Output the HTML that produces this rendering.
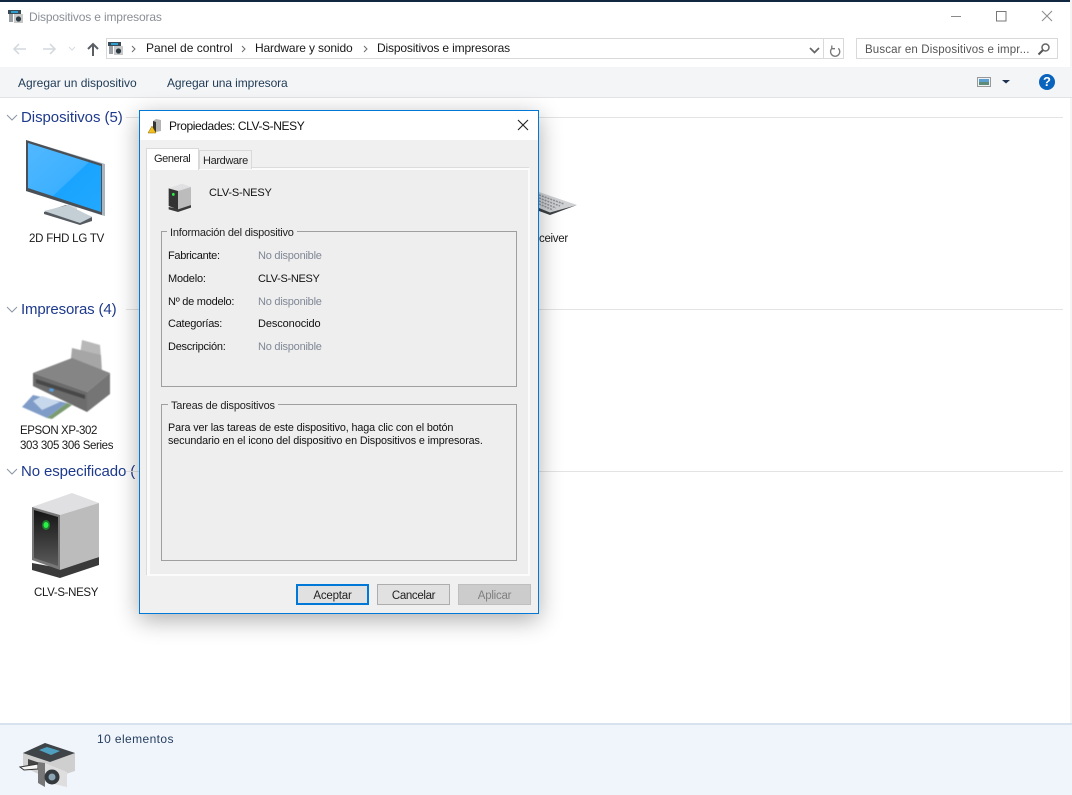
<!DOCTYPE html>
<html lang="es"><head><meta charset="utf-8"><title>Dispositivos e impresoras</title>
<style>
html,body{margin:0;padding:0;width:1072px;height:795px;overflow:hidden;background:#fff;font-family:"Liberation Sans",sans-serif;font-size:12px;color:#1a1a1a}
.a{position:absolute;white-space:nowrap}
.t{position:absolute;white-space:nowrap;line-height:14px}
.h{position:absolute;white-space:nowrap;font-size:15px;color:#1e3a8c;line-height:18px}
.l{position:absolute;height:1px;background:#e3e3e3}
.d{font-size:11px;color:#111}
.g{color:#808896}
.btn{position:absolute;top:584px;width:73px;height:21px;box-sizing:border-box;text-align:center;font-size:11.5px}
svg{position:absolute;overflow:visible}
</style></head><body>
<div class="a" style="left:0;top:0;width:1072px;height:2px;background:#10273f"></div>
<div class="a" style="left:1070px;top:0;width:2px;height:795px;background:#f4f4f4"></div>

<svg style="left:8px;top:9px" width="16" height="16" viewBox="0 0 16 16"><rect x="0" y="1" width="13" height="4" fill="#3a4a55"/><rect x="3" y="2" width="7" height="2" fill="#2f9fd0"/><rect x="1" y="5" width="4" height="8" fill="#9aa0a5"/><rect x="6" y="5" width="9" height="9" fill="#c8c8c8"/><circle cx="10.500" cy="10" r="2.600" fill="#2a3a42"/></svg>
<div class="t" style="left:29px;top:10px;color:#8a8f96;letter-spacing:-.16px">Dispositivos e impresoras</div>
<svg style="left:950px;top:10px" width="102" height="14"><path d="M1 6.500H11" stroke="#8a8a8a" fill="none"/><rect x="46.500" y="1.500" width="9.500" height="9.500" fill="none" stroke="#777"/><path d="M92 1L102 11M102 1L92 11" stroke="#8a8a8a" fill="none"/></svg>

<svg style="left:12px;top:41px" width="100" height="16"><path d="M2 8H14M7 3L2 8L7 13" stroke="#d3d8dd" stroke-width="1.500" fill="none"/><path d="M31 8H43M38 3L43 8L38 13" stroke="#d3d8dd" stroke-width="1.500" fill="none"/><path d="M57 6L60 9L63 6" stroke="#d8dbdf" fill="none"/><path d="M81 15V3M76 8L81 3L86 8" stroke="#5a5f66" stroke-width="2" fill="none"/></svg>
<div class="a" style="left:106px;top:38px;width:738px;height:21px;box-sizing:border-box;border:1px solid #d9d9d9"></div>
<div class="a" style="left:823px;top:38px;width:1px;height:21px;background:#d9d9d9"></div>
<svg style="left:108px;top:41px" width="16" height="16" viewBox="0 0 16 16"><rect x="0" y="1" width="13" height="4" fill="#3a4a55"/><rect x="3" y="2" width="7" height="2" fill="#2f9fd0"/><rect x="1" y="5" width="4" height="8" fill="#9aa0a5"/><rect x="6" y="5" width="9" height="9" fill="#c8c8c8"/><circle cx="10.500" cy="10" r="2.600" fill="#2a3a42"/></svg>
<svg style="left:130px;top:44px" width="240" height="10"><path d="M2 2L5 5L2 8M112 2L115 5L112 8M234 2L237 5L234 8" stroke="#6a6a6a" fill="none"/></svg>
<div class="t" style="left:146px;top:41px">Panel de control</div>
<div class="t" style="left:255px;top:41px;letter-spacing:-.15px">Hardware y sonido</div>
<div class="t" style="left:377px;top:41px;letter-spacing:-.15px">Dispositivos e impresoras</div>
<svg style="left:808px;top:44px" width="36" height="12"><path d="M2 4L6.500 8.500L11 4" stroke="#666" stroke-width="1.700" fill="none"/><path d="M30.800 2.800A4.600 4.600 0 1 1 24.500 2.800M24.300 0V3.200H27.500" stroke="#777" stroke-width="1.300" fill="none" transform="translate(-.5 1.500)"/></svg>
<div class="a" style="left:856px;top:38px;width:202px;height:21px;box-sizing:border-box;border:1px solid #d9d9d9"></div>
<div class="t" style="left:865px;top:43px;color:#555;font-size:11.500px;letter-spacing:.13px">Buscar en Dispositivos e impr...</div>
<svg style="left:1037px;top:42px" width="14" height="14"><circle cx="8.500" cy="5.500" r="3.500" fill="none" stroke="#666" stroke-width="1.500"/><path d="M6 8L1.500 12.500" stroke="#555" stroke-width="2"/></svg>

<div class="a" style="left:0;top:67px;width:1072px;height:31px;box-sizing:border-box;background:#f4f5f7;border-bottom:1px solid #e3e3e3"></div>
<div class="t" style="left:18px;top:76px;color:#1f3a55;font-size:12px">Agregar un dispositivo</div>
<div class="t" style="left:167px;top:76px;color:#1f3a55;font-size:12px;letter-spacing:-.1px">Agregar una impresora</div>
<svg style="left:977px;top:77px" width="32" height="12"><rect x=".5" y=".5" width="13" height="9" fill="#eef2f5" stroke="#999"/><rect x="2" y="2" width="10" height="3" fill="#5a9fd0"/><rect x="2" y="5" width="10" height="3" fill="#5e8a78"/><path d="M25 3H33L29 6.500Z" fill="#1f3050"/></svg>
<div class="a" style="left:1039px;top:74px;width:16px;height:16px;border-radius:50%;background:#0a64bd;color:#fff;font-weight:bold;font-size:13px;line-height:16px;text-align:center">?</div>

<svg style="left:6px;top:113px" width="12" height="10"><path d="M1 2L6 7L11 2" stroke="#8a95a5" fill="none"/></svg>
<div class="h" style="left:21px;top:109px;letter-spacing:-.05px">Dispositivos (5)</div>
<div class="l" style="left:126px;top:117px;width:937px"></div>
<svg style="left:6px;top:305px" width="12" height="10"><path d="M1 2L6 7L11 2" stroke="#8a95a5" fill="none"/></svg>
<div class="h" style="left:21px;top:301px;letter-spacing:-.15px">Impresoras (4)</div>
<div class="l" style="left:126px;top:309px;width:937px"></div>
<svg style="left:6px;top:467px" width="12" height="10"><path d="M1 2L6 7L11 2" stroke="#8a95a5" fill="none"/></svg>
<div class="h" style="left:21px;top:463px;letter-spacing:-.1px">No especificado (</div>
<div class="l" style="left:126px;top:471px;width:937px"></div>

<!-- Monitor -->
<svg style="left:0;top:130px" width="140" height="110">
<defs>
<linearGradient id="scr" x1="0" y1="0" x2="1" y2="1"><stop offset="0" stop-color="#52b8ff"/><stop offset=".55" stop-color="#3cb0ff"/><stop offset=".56" stop-color="#19a4ff"/><stop offset="1" stop-color="#22a8ff"/></linearGradient>
<linearGradient id="drv" x1="0" y1="0" x2="0" y2="1"><stop offset="0" stop-color="#141414"/><stop offset="1" stop-color="#5a5a5a"/></linearGradient>
</defs>
<path d="M68 70L77 73V85L68 83Z" fill="#d9dde0"/>
<path d="M44 82L66 75L92 87V91L80 95L44 84Z" fill="#555b60"/>
<path d="M44 81L68 75L92 87L80 93Z" fill="#c3ced5"/>
<path d="M26 10L105 34V86L101 85L26 61Z" fill="#aab4bc"/>
<path d="M26 10L102 34V85L26 61Z" fill="#4a5055"/>
<path d="M28 13L101 36V82L28 58Z" fill="url(#scr)"/>
</svg>
<div class="t" style="left:29px;top:232px;font-size:11.500px;letter-spacing:-.22px">2D FHD LG TV</div>

<!-- Printer -->
<svg style="left:0;top:330px;filter:blur(.5px)" width="140" height="85">
<path d="M82 10L100 15L101 27L80 25Z" fill="#b8b8b8"/>
<path d="M72 18L101 25L102 42L70 38Z" fill="#a6a6a6"/>
<path d="M33 43L72 28L110 43L87 62Z" fill="#858585"/>
<path d="M33 43L87 62V82L33 56Z" fill="#6c6c6c"/>
<path d="M36 49L85 65V69L36 53Z" fill="#484848"/>
<path d="M87 62L110 43V64L87 82Z" fill="#757575"/>
<path d="M50 58L54 59L53 62L49 61Z" fill="#5a9fe0"/>
<path d="M22 77L33 65L67 73L47 88Z" fill="#7f9cc8"/>
<path d="M33 71L42 66L60 72L42 80Z" fill="#c8d8ec"/>
<path d="M47 88L67 73L72 75L52 89Z" fill="#7a9a70"/>
</svg>
<div class="t" style="left:20px;top:424px;font-size:11.500px;letter-spacing:-.4px">EPSON XP-302</div>
<div class="t" style="left:20px;top:439px;font-size:11.500px;letter-spacing:-.37px">303 305 306 Series</div>

<!-- Drive -->
<svg style="left:0;top:480px" width="140" height="100">
<path d="M32 83V90L60 98L99 85V77L60 88Z" fill="#3a3a3a"/>
<path d="M32 27L72 13L99 23L60 35Z" fill="#e0e0e2"/>
<path d="M32 27L60 35V90L32 80Z" fill="#777"/>
<path d="M34 30L58 37V86L34 78Z" fill="url(#drv)"/>
<path d="M60 35L99 23V77L60 90Z" fill="#bcbcbc"/>
<ellipse cx="46" cy="45" rx="4" ry="5" fill="#17c52e" opacity=".55"/>
<ellipse cx="46" cy="45" rx="2.500" ry="3" fill="#2cf04a"/>
</svg>
<div class="t" style="left:34px;top:586px;font-size:11.500px;letter-spacing:-.35px">CLV-S-NESY</div>

<!-- Keyboard fragment -->
<svg style="left:530px;top:185px" width="50" height="35"><path d="M9 7L47 20L20 28L9 24Z" fill="#cfd1d3"/><path d="M9 10L34 19M9 13L30 21M9 16L26 23M9 19L23 25" stroke="#8f9499" stroke-width="1.500" stroke-dasharray="2 1" fill="none"/><path d="M9 23L20 27.500L47 20L20 30L9 26Z" fill="#3d4246"/></svg>
<div class="t" style="left:539px;top:232px;font-size:11.500px;letter-spacing:-.3px">ceiver</div>

<!-- Status bar -->
<div class="a" style="left:0;top:723px;width:1072px;height:72px;background:#f0f4fb;border-top:2px solid #d8e2ee;box-sizing:border-box"></div>
<svg style="left:0;top:715px" width="90" height="80">
<path d="M23 38L45 28L75 38V56L50 64L23 52Z" fill="#cfcfcf"/>
<path d="M23 38L45 28L75 38L50 47Z" fill="#3f4448"/>
<path d="M39 35L47 32L60 36L51 40Z" fill="#4fa0c0"/>
<path d="M28 44L46 50V56L28 50Z" fill="#444"/>
<path d="M20 52L38 49V54L24 55Z" fill="#f5f5f5" stroke="#333" stroke-width="1"/>
<path d="M38 47L45 48V72L38 68Z" fill="#777"/>
<path d="M45 48L67 57V72L45 67Z" fill="#dedede"/>
<circle cx="52" cy="62" r="7.500" fill="#34393e"/><circle cx="52" cy="62" r="3.500" fill="#8aa4b4"/>
</svg>
<div class="t" style="left:97px;top:732px;color:#26405e;letter-spacing:.4px">10 elementos</div>

<!-- Dialog -->
<div class="a" style="left:139px;top:110px;width:400px;height:504px;box-sizing:border-box;background:#f0f0f0;border:1px solid #0078d7;box-shadow:0 6px 22px rgba(0,0,0,.32)"></div>
<div class="a" style="left:140px;top:111px;width:398px;height:29px;background:#fff"></div>
<svg style="left:148px;top:118px" width="16" height="16" viewBox="0 0 16 16"><path d="M5 3L8 1L13 2V13L8 14L5 12Z" fill="#b5b5b5"/><path d="M5 3L8 4V14L5 12Z" fill="#333"/><path d="M4 8L8 15H0Z" fill="#f4c020" stroke="#8a6a00" stroke-width=".5"/></svg>
<div class="t" style="left:169px;top:119px;font-size:12px;letter-spacing:-.4px;color:#111">Propiedades: CLV-S-NESY</div>
<svg style="left:517px;top:119px" width="12" height="12"><path d="M1 1L11 11M11 1L1 11" stroke="#222" stroke-width="1.100" fill="none"/></svg>

<div class="a" style="left:147px;top:168px;width:383px;height:408px;box-sizing:border-box;background:#eeeeee;border:2px solid #fbfbfb;border-left-width:3px;box-shadow:-1px -1px 0 #dcdcdc"></div>
<div class="a" style="left:199px;top:150px;width:53px;height:19px;box-sizing:border-box;background:#f0f0f0;border:1px solid #d9d9d9;border-bottom:0"></div>
<div class="a" style="left:146px;top:148px;width:53px;height:22px;box-sizing:border-box;background:#fff;border:1px solid #d9d9d9;border-bottom:0"></div>
<div class="t d" style="left:154px;top:152px;color:#222;letter-spacing:-.4px">General</div>
<div class="t d" style="left:203px;top:154px;color:#222;letter-spacing:-.35px">Hardware</div>

<svg style="left:168px;top:183px" width="24" height="29" viewBox="30 11 72 87"><path d="M32 83V90L60 98L99 85V77L60 88Z" fill="#3a3a3a"/><path d="M32 27L72 13L99 23L60 35Z" fill="#e0e0e2"/><path d="M32 27L60 35V90L32 80Z" fill="#333"/><path d="M60 35L99 23V77L60 90Z" fill="#bcbcbc"/><ellipse cx="46" cy="45" rx="4" ry="4.500" fill="#2cf04a"/></svg>
<div class="t d" style="left:209px;top:186px;letter-spacing:-.2px">CLV-S-NESY</div>

<div class="a" style="left:161px;top:231px;width:356px;height:156px;box-sizing:border-box;border:1px solid #9f9f9f"></div>
<div class="t d" style="left:167px;top:226px;background:#eee;padding:0 3px;color:#222;letter-spacing:-.22px">Información del dispositivo</div>
<div class="t d" style="left:168px;top:249px;letter-spacing:-.3px">Fabricante:</div><div class="t d g" style="left:258px;top:249px;letter-spacing:-.23px">No disponible</div>
<div class="t d" style="left:168px;top:272px;letter-spacing:-.2px">Modelo:</div><div class="t d" style="left:258px;top:272px;letter-spacing:-.3px">CLV-S-NESY</div>
<div class="t d" style="left:168px;top:295px;letter-spacing:-.25px">Nº de modelo:</div><div class="t d g" style="left:258px;top:295px;letter-spacing:-.23px">No disponible</div>
<div class="t d" style="left:168px;top:317px;letter-spacing:-.25px">Categorías:</div><div class="t d" style="left:258px;top:317px;letter-spacing:-.1px">Desconocido</div>
<div class="t d" style="left:168px;top:340px;letter-spacing:-.25px">Descripción:</div><div class="t d g" style="left:258px;top:340px;letter-spacing:-.23px">No disponible</div>

<div class="a" style="left:161px;top:404px;width:356px;height:157px;box-sizing:border-box;border:1px solid #9f9f9f"></div>
<div class="t d" style="left:168px;top:399px;background:#eee;padding:0 3px;color:#222;letter-spacing:-.2px">Tareas de dispositivos</div>
<div class="t d" style="left:168px;top:421px;font-size:10.800px;letter-spacing:-.12px">Para ver las tareas de este dispositivo, haga clic con el botón</div>
<div class="t d" style="left:168px;top:434px;font-size:10.800px;letter-spacing:-.12px">secundario en el icono del dispositivo en Dispositivos e impresoras.</div>

<div class="btn" style="left:296px;background:#e1e1e1;border:2px solid #0078d7;color:#222;line-height:20px;letter-spacing:-.2px">Aceptar</div>
<div class="btn" style="left:377px;background:#e1e1e1;border:1px solid #adadad;color:#222;line-height:22px;letter-spacing:-.35px">Cancelar</div>
<div class="btn" style="left:458px;background:#cccccc;border:1px solid #bfbfbf;color:#808080;line-height:22px;letter-spacing:-.25px">Aplicar</div>
</body></html>
